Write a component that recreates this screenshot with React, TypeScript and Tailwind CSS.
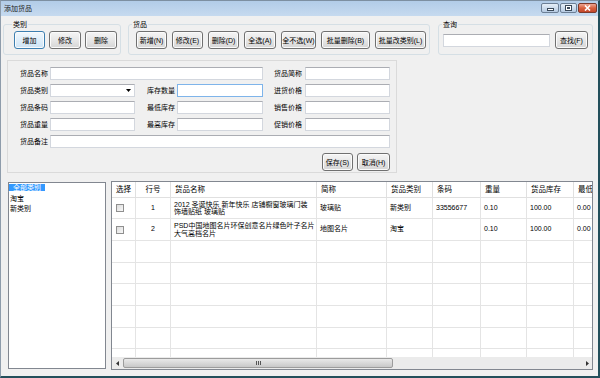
import React from 'react';
import clsx from 'clsx';

const font = "font-['Liberation_Sans','Noto_Sans_CJK_SC',sans-serif]";

function Button({ label, w, focus }: { label: string; w: string; focus?: boolean }) {
    return (
        <button
            className={clsx(
                w,
                'h-[18px] shrink-0 rounded-[3px] border text-[7px] leading-none text-black flex items-center justify-center shadow-[inset_0_0_0_1px_#fbfbfb]',
                focus
                    ? 'border-[#3c7fb1] bg-linear-to-b from-[#f1f8fd] to-[#cde4f6]'
                    : 'border-[#707070] bg-linear-to-b from-[#f5f5f5] via-[#e7e7e7] to-[#d5d5d5]'
            )}
        >
            {label}
        </button>
    );
}

function Field({ w, focus, select }: { w: string; focus?: boolean; select?: boolean }) {
    return (
        <div
            className={clsx(
                w,
                'h-[13px] shrink-0 bg-white border',
                focus ? 'border-[#7eb4ea]' : 'border-[#d3d7de] border-t-[#abadb3]',
                select && 'flex items-center justify-end pr-[3px]'
            )}
        >
            {select && (
                <svg width="5" height="3" viewBox="0 0 5 3">
                    <path d="M0 0h5L2.5 3z" fill="#000" />
                </svg>
            )}
        </div>
    );
}

function Label({ text, w = 'w-[30px]' }: { text: string; w?: string }) {
    return <span className={clsx(w, 'shrink-0 text-[7px] leading-none text-black')}>{text}</span>;
}

const colW = ['w-[24px]', 'w-[35px]', 'w-[146px]', 'w-[70px]', 'w-[46px]', 'w-[48px]', 'w-[46px]', 'w-[47px]', 'w-[60px]'];
const headers = ['选择', '行号', '货品名称', '简称', '货品类别', '条码', '重量', '货品库存', '最低'];
const rowH = ['h-[21px]', 'h-[22px]', 'h-[22px]', 'h-[21px]', 'h-[22px]', 'h-[22px]', 'h-[21px]', 'h-[22px]'];

const goods = [
    {
        no: '1',
        name: ['2012 圣诞快乐 新年快乐 店铺橱窗玻璃门装', '饰墙贴纸 玻璃贴'],
        short: '玻璃贴',
        cat: '新类别',
        code: '33556677',
        weight: '0.10',
        stock: '100.00',
        min: '0.00',
    },
    {
        no: '2',
        name: ['PSD中国地图名片环保创意名片绿色叶子名片', '大气高档名片'],
        short: '地图名片',
        cat: '淘宝',
        code: '',
        weight: '0.10',
        stock: '100.00',
        min: '0.00',
    },
];

function Checkbox() {
    return <div className="w-[8px] h-[8px] border border-[#8f8f8f] bg-linear-to-br from-[#dcdcdc] to-[#f8f8f8]" />;
}

export default function App() {
    return (
        <div
            className={clsx(
                font,
                'w-[600px] h-[378px] flex flex-col overflow-hidden bg-[#f0f0f0] border-l border-t border-r-2 border-b-2 border-l-[#8e9cab] border-t-[#7d8fa1] border-r-[#234f5b] border-b-[#234f5b]'
            )}
        >
            {/* title bar */}
            <div className="h-[15px] shrink-0 flex justify-between bg-linear-to-b from-[#b2cce8] to-[#c6daef]">
                <span className="pl-[3px] text-[7px] leading-[15px] text-[#1a1a1a]">添加货品</span>
                <div className="flex gap-[1px] pt-[2px] pr-[1px]">
                    <div className="w-[18px] h-[10px] rounded-[2px] border border-[#6c7f95] bg-linear-to-b from-[#e6eff8] to-[#b5cae2] flex items-end justify-center pb-[1px]">
                        <div className="w-[7px] h-[3px] bg-white border border-[#3b4a5a]" />
                    </div>
                    <div className="w-[17px] h-[10px] rounded-[2px] border border-[#6c7f95] bg-linear-to-b from-[#e6eff8] to-[#b5cae2] flex items-center justify-center">
                        <div className="w-[7px] h-[6px] bg-white border border-[#3b4a5a] p-[1px]">
                            <div className="w-full h-full bg-[#b5cae2] border border-[#3b4a5a]" />
                        </div>
                    </div>
                    <div className="w-[19px] h-[10px] rounded-[2px] border border-[#7b3a2c] bg-linear-to-b from-[#eba592] via-[#d8613f] to-[#c4472a] flex items-center justify-center">
                        <svg width="7" height="6" viewBox="0 0 7 6">
                            <path d="M1 0.5l5 5M6 0.5l-5 5" stroke="#fff" strokeWidth="1.6" />
                        </svg>
                    </div>
                </div>
            </div>

            {/* group boxes */}
            <div className="flex mt-[4px] shrink-0">
                <fieldset className="ml-[2px] w-[118px] border border-[#d5dfe5] rounded-[3px] pb-[5px]">
                    <legend className="ml-[8px] px-[1px] text-[7px] leading-[9px]">类别</legend>
                    <div className="flex gap-[4px] pl-[10px] mt-[2px]">
                        <Button label="增加" w="w-[31px]" focus />
                        <Button label="修改" w="w-[32px]" />
                        <Button label="删除" w="w-[32px]" />
                    </div>
                </fieldset>
                <fieldset className="ml-[7px] w-[302px] border border-[#d5dfe5] rounded-[3px] pb-[5px]">
                    <legend className="ml-[3px] px-[1px] text-[7px] leading-[9px]">货品</legend>
                    <div className="flex gap-[5px] pl-[7px] mt-[2px]">
                        <Button label="新增(N)" w="w-[31px]" />
                        <Button label="修改(E)" w="w-[31px]" />
                        <Button label="删除(D)" w="w-[31px]" />
                        <Button label="全选(A)" w="w-[32px]" />
                        <Button label="全不选(W)" w="w-[35px]" />
                        <Button label="批量删除(B)" w="w-[49px]" />
                        <Button label="批量改类别(L)" w="w-[51px]" />
                    </div>
                </fieldset>
                <fieldset className="ml-[8px] w-[155px] border border-[#d5dfe5] rounded-[3px] pb-[5px]">
                    <legend className="ml-[3px] px-[1px] text-[7px] leading-[9px]">查询</legend>
                    <div className="flex items-center gap-[5px] pl-[4px] mt-[2px]">
                        <Field w="w-[107px]" />
                        <Button label="查找(F)" w="w-[33px]" />
                    </div>
                </fieldset>
            </div>

            {/* edit panel */}
            <div className="ml-[6px] mt-[5px] w-[390px] h-[113px] shrink-0 border border-[#dadada] pt-[6px] pl-[12px] pr-[6px] flex flex-col gap-[4px]">
                <div className="flex items-center">
                    <Label text="货品名称" />
                    <Field w="w-[213px]" />
                    <div className="ml-[11px] flex items-center">
                        <Label text="货品简称" w="w-[31px]" />
                        <Field w="w-[85px]" />
                    </div>
                </div>
                <div className="flex items-center">
                    <Label text="货品类别" />
                    <Field w="w-[85px]" select />
                    <div className="ml-[12px] flex items-center">
                        <Label text="库存数量" />
                        <Field w="w-[86px]" focus />
                    </div>
                    <div className="ml-[11px] flex items-center">
                        <Label text="进货价格" w="w-[31px]" />
                        <Field w="w-[85px]" />
                    </div>
                </div>
                <div className="flex items-center">
                    <Label text="货品条码" />
                    <Field w="w-[85px]" />
                    <div className="ml-[12px] flex items-center">
                        <Label text="最低库存" />
                        <Field w="w-[86px]" />
                    </div>
                    <div className="ml-[11px] flex items-center">
                        <Label text="销售价格" w="w-[31px]" />
                        <Field w="w-[85px]" />
                    </div>
                </div>
                <div className="flex items-center">
                    <Label text="货品重量" />
                    <Field w="w-[85px]" />
                    <div className="ml-[12px] flex items-center">
                        <Label text="最高库存" />
                        <Field w="w-[86px]" />
                    </div>
                    <div className="ml-[11px] flex items-center">
                        <Label text="促销价格" w="w-[31px]" />
                        <Field w="w-[85px]" />
                    </div>
                </div>
                <div className="flex items-center">
                    <Label text="货品备注" />
                    <Field w="w-[340px]" />
                </div>
                <div className="flex justify-end gap-[4px] mt-[1px]">
                    <Button label="保存(S)" w="w-[31px]" />
                    <Button label="取消(H)" w="w-[33px]" />
                </div>
            </div>

            {/* list + grid */}
            <div className="flex ml-[7px] mt-[8px] shrink-0">
                <div className="mt-[1px] w-[98px] h-[187px] bg-white border border-[#828790] text-[7px] leading-[10.5px] text-black">
                    <div>
                        <span className="bg-[#3399ff] text-white">_全部类别_</span>
                    </div>
                    <div className="pl-[1px]">淘宝</div>
                    <div className="pl-[1px]">新类别</div>
                </div>

                <div className="ml-[5px] w-[482px] h-[189px] bg-white border border-[#828790] flex flex-col overflow-hidden">
                    <div className="h-[16px] shrink-0 flex border-b border-[#e0e0e0] text-[7.5px] text-black">
                        {headers.map((h, i) => (
                            <div
                                key={h}
                                className={clsx(
                                    colW[i],
                                    'shrink-0 h-full border-r border-[#e0e0e0] flex items-center',
                                    i === 1 ? 'justify-center' : 'pl-[4px]'
                                )}
                            >
                                {h}
                            </div>
                        ))}
                    </div>
                    <div className="flex-1 overflow-hidden text-[7px] text-black">
                        {rowH.map((h, r) => {
                            const g = goods[r];
                            const cells = g
                                ? [g.no, g.name, g.short, g.cat, g.code, g.weight, g.stock, g.min]
                                : [];
                            return (
                                <div key={r} className={clsx(h, 'flex border-b border-[#e4e4e4]')}>
                                    {colW.map((w, i) => (
                                        <div
                                            key={i}
                                            className={clsx(
                                                w,
                                                'shrink-0 h-full border-r border-[#e4e4e4] flex items-center',
                                                i === 1 ? 'justify-center' : 'pl-[3px]'
                                            )}
                                        >
                                            {g && i === 0 && <div className="ml-[1px]"><Checkbox /></div>}
                                            {g && i === 2 && (
                                                <div className="leading-[7.5px] whitespace-nowrap">
                                                    <div>{g.name[0]}</div>
                                                    <div>{g.name[1]}</div>
                                                </div>
                                            )}
                                            {g && i !== 0 && i !== 2 && (
                                                <span className="whitespace-nowrap">{cells[i - 1] as string}</span>
                                            )}
                                        </div>
                                    ))}
                                </div>
                            );
                        })}
                    </div>
                    <div className="h-[12px] shrink-0 flex items-center bg-[#ebebeb]">
                        <div className="w-[11px] flex justify-center">
                            <svg width="3" height="5" viewBox="0 0 3 5">
                                <path d="M3 0v5L0 2.5z" fill="#333" />
                            </svg>
                        </div>
                        <div className="w-[270px] h-[10px] rounded-[2px] border border-[#9c9c9c] bg-linear-to-b from-[#e9e9e9] to-[#c8c8c8] flex items-center justify-center">
                            <svg width="5" height="4" viewBox="0 0 5 4">
                                <path d="M0.5 0v4M2.5 0v4M4.5 0v4" stroke="#555" strokeWidth="1" />
                            </svg>
                        </div>
                        <div className="flex-1" />
                        <div className="w-[10px] flex justify-center">
                            <svg width="3" height="5" viewBox="0 0 3 5">
                                <path d="M0 0v5L3 2.5z" fill="#333" />
                            </svg>
                        </div>
                    </div>
                </div>
            </div>
        </div>
    );
}
